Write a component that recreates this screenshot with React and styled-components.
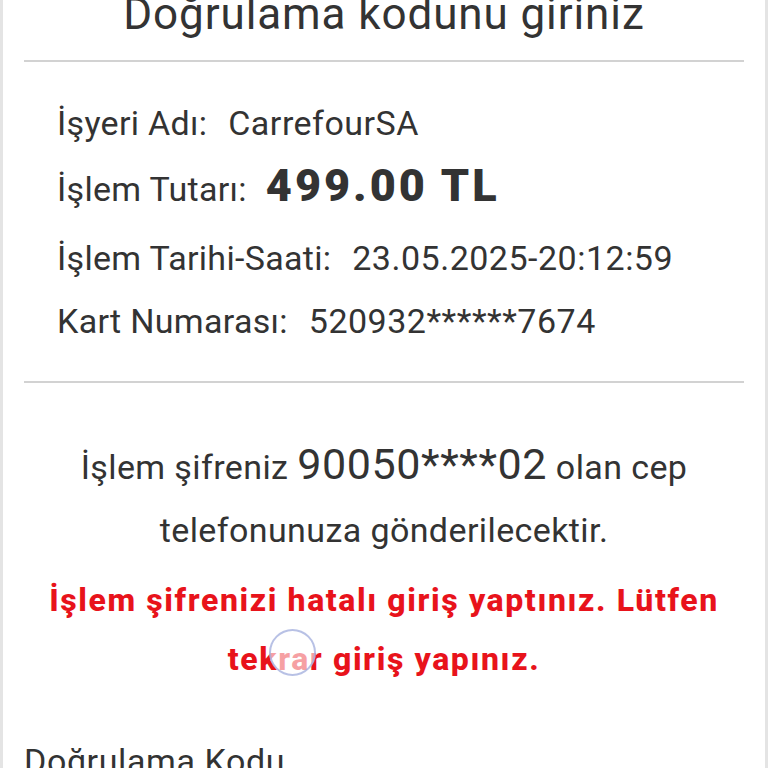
import React from "react";
import styled, { createGlobalStyle } from "styled-components";

const GlobalStyle = createGlobalStyle`
  html, body { margin: 0; padding: 0; background: #ffffff; }
  body { font-family: Roboto, "Noto Sans", sans-serif; color: #333333; }
  * { box-sizing: border-box; }
`;

const Page = styled.div`
  position: relative;
  height: 768px;
  overflow: hidden;
  border-left: 3px solid #e4e4e4;
  border-right: 3px solid #e4e4e4;
  background: #ffffff;
`;

const Title = styled.h1`
  margin: -8px 0 0;
  font-size: 44px;
  font-weight: 400;
  letter-spacing: 0.9px;
  line-height: 1;
  text-align: center;
  color: #333333;
`;

const Divider = styled.div`
  height: 2px;
  margin: ${(p) => p.$top}px 21px 0;
  background: #d2d2d2;
`;

const InfoList = styled.div`
  padding: 30px 0 0 54px;
  display: flex;
  flex-direction: column;
`;

const Row = styled.div`
  display: flex;
  align-items: baseline;
  gap: 21px;
  margin-top: ${(p) => p.$mt || 0}px;
  font-size: 34px;
  letter-spacing: 0.3px;
  line-height: ${(p) => p.$h}px;
  color: #333333;
  white-space: nowrap;
`;

const Label = styled.span``;

const Value = styled.span`
  font-size: ${(p) => (p.$big ? 45 : 34)}px;
  font-weight: ${(p) => (p.$big ? 900 : 400)};
  letter-spacing: ${(p) => (p.$big ? 3 : 0.5)}px;
  margin-left: ${(p) => (p.$big ? -2 : 0)}px;
`;

const Message = styled.p`
  margin: 50px 0 0;
  font-size: 34px;
  letter-spacing: 0.4px;
  line-height: 63px;
  text-align: center;
  color: #333333;
`;

const Masked = styled.span`
  font-size: 43px;
  letter-spacing: 0.6px;
`;

const ErrorText = styled.p`
  margin: 9px 0 0;
  padding: 0 4px;
  font-size: 32px;
  font-weight: 800;
  letter-spacing: 1.6px;
  line-height: 59px;
  text-align: center;
  color: #e8131b;
`;

const FieldLabel = styled.div`
  margin: 52px 0 0 21px;
  font-size: 34px;
  letter-spacing: 0.6px;
  line-height: 40px;
  color: #333333;
`;

const TouchRing = styled.div`
  position: absolute;
  left: 266px;
  top: 629px;
  width: 47px;
  height: 47px;
  border-radius: 50%;
  border: 2px solid rgba(160, 172, 220, 0.75);
  background: rgba(255, 255, 255, 0.6);
`;

export default function App() {
  return (
    <>
      <GlobalStyle />
      <Page>
        <Title>Doğrulama kodunu giriniz</Title>
        <Divider $top={24} />
        <InfoList>
          <Row $h={62}>
            <Label>İşyeri Adı:</Label>
            <Value>CarrefourSA</Value>
          </Row>
          <Row $h={64}>
            <Label>İşlem Tutarı:</Label>
            <Value $big>499.00 TL</Value>
          </Row>
          <Row $h={63} $mt={6}>
            <Label>İşlem Tarihi-Saati:</Label>
            <Value>23.05.2025-20:12:59</Value>
          </Row>
          <Row $h={63}>
            <Label>Kart Numarası:</Label>
            <Value>520932******7674</Value>
          </Row>
        </InfoList>
        <Divider $top={28} />
        <Message>
          İşlem şifreniz <Masked>90050****02</Masked> olan cep
          <br />
          telefonunuza gönderilecektir.
        </Message>
        <ErrorText>
          İşlem şifrenizi hatalı giriş yaptınız. Lütfen
          <br />
          tekrar giriş yapınız.
        </ErrorText>
        <FieldLabel>Doğrulama Kodu</FieldLabel>
        <TouchRing />
      </Page>
    </>
  );
}
